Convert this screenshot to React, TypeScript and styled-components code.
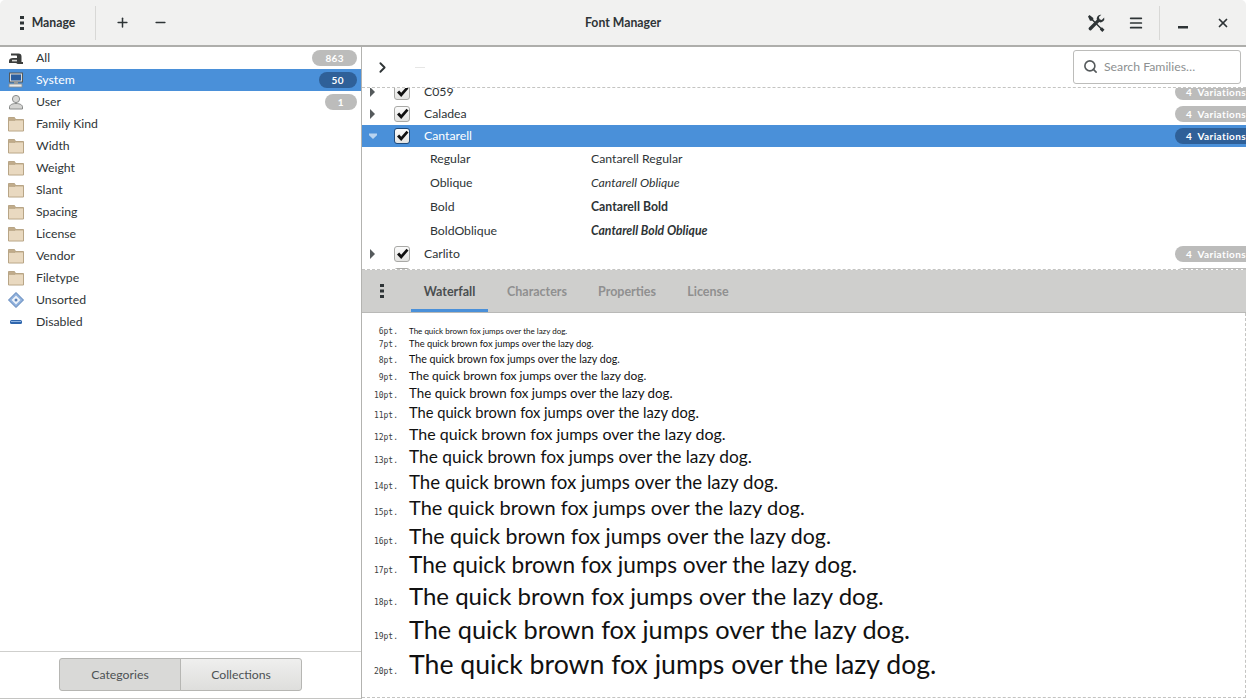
import { useState } from "react";
import styled, { createGlobalStyle } from "styled-components";
import { ChevronRight, Menu, Minus, Plus, Search, X } from "lucide-react";

const GlobalStyle = createGlobalStyle`
  html, body { margin: 0; padding: 0; background: #fff; }
  * { box-sizing: border-box; }
  body { font-family: Lato, "Noto Sans", sans-serif; font-size: 12.25px; color: #2e3436; }
`;

const Window = styled.div`
  width: 1246px;
  height: 699px;
  display: flex;
  flex-direction: column;
  overflow: hidden;
  background: #fff;
`;

const HeaderBar = styled.header`
  height: 47px;
  flex: none;
  display: flex;
  align-items: center;
  justify-content: space-between;
  background: #f1f1f0;
  border-bottom: 2px solid #aeaeab;
  border-radius: 5px 5px 0 0;
  position: relative;
`;

const HeaderGroup = styled.div`
  display: flex;
  align-items: center;
  height: 100%;
`;

const HeaderSeparator = styled.div<{ $gap?: number }>`
  width: 1px;
  height: 34px;
  margin-left: ${(p) => p.$gap ?? 0}px;
  background: #d8d8d6;
`;

const HeaderButton = styled.button<{ $w: number }>`
  width: ${(p) => p.$w}px;
  height: 34px;
  border: 0;
  background: none;
  padding: 0;
  display: flex;
  align-items: center;
  justify-content: center;
  gap: 8px;
  color: #2e3436;
  font: 700 12.25px Lato, sans-serif;
`;

const Title = styled.div`
  position: absolute;
  left: 0;
  right: 0;
  text-align: center;
  font-weight: 700;
  color: #2e3436;
`;

const Body = styled.div`
  flex: 1;
  min-height: 0;
  display: flex;
`;

const Sidebar = styled.aside`
  width: 362px;
  flex: none;
  display: flex;
  flex-direction: column;
  border-right: 1px solid #b3b3b0;
  border-bottom: 1px solid #c4c4c2;
`;

const CategoryList = styled.ul`
  flex: 1;
  margin: 0;
  padding: 0;
  list-style: none;
`;

const CategoryRow = styled.li<{ $selected?: boolean }>`
  height: 22px;
  display: flex;
  align-items: center;
  padding: 0 4px 0 8px;
  background: ${(p) => (p.$selected ? "#4a90d9" : "transparent")};
  color: ${(p) => (p.$selected ? "#fff" : "#2e3436")};
`;

const CategoryIcon = styled.svg`
  width: 16px;
  height: 16px;
  flex: none;
`;

const CategoryName = styled.span`
  margin-left: 12px;
  padding-bottom: 2px;
  flex: 1;
`;

const Badge = styled.span<{ $selected?: boolean }>`
  height: 16px;
  padding: 0 13px;
  border-radius: 8px;
  display: inline-flex;
  align-items: center;
  font-size: 10px;
  font-weight: 700;
  letter-spacing: 0.4px;
  color: #fff;
  background: ${(p) => (p.$selected ? "#2f6098" : "#bcbcbb")};
`;

const SidebarFooter = styled.div`
  height: 47px;
  flex: none;
  border-top: 1px solid #cfcfcd;
  display: flex;
  justify-content: center;
  padding: 6px 0 0 0;
`;

const ModeButton = styled.button<{ $active?: boolean }>`
  width: 122px;
  height: 33px;
  border: 1px solid #b6b6b3;
  margin-left: -1px;
  padding: 0;
  color: #4d5254;
  font: 12.25px Lato, sans-serif;
  background: ${(p) => (p.$active ? "#d9d9d7" : "linear-gradient(#efefee, #dededc)")};
  &:first-child { border-radius: 3px 0 0 3px; margin-left: 0; }
  &:last-child { border-radius: 0 3px 3px 0; }
`;

const Main = styled.main`
  flex: 1;
  min-width: 0;
  display: flex;
  flex-direction: column;
`;

const FamilyToolbar = styled.div`
  height: 41px;
  flex: none;
  display: flex;
  align-items: center;
  padding: 0 5px 0 12px;
  border-bottom: 1px dashed #c4c4c2;
`;

const FaintDash = styled.div`
  width: 10px;
  height: 1px;
  margin-left: 24px;
  background: #e6e6e5;
`;

const SearchBox = styled.div`
  margin-left: auto;
  width: 168px;
  height: 34px;
  border: 1px solid #bcbcba;
  border-radius: 3px;
  display: flex;
  align-items: center;
  gap: 6px;
  padding: 0 8px 1px 9px;
  color: #8d9091;
`;

const FamilyViewport = styled.div`
  height: 182px;
  flex: none;
  overflow: hidden;
  border-bottom: 1px dashed #c4c4c2;
`;

const FamilyScroller = styled.div`
  margin-top: -7px;
`;

const FamilyRow = styled.div<{ $selected?: boolean }>`
  height: 22px;
  display: flex;
  align-items: center;
  overflow: hidden;
  background: ${(p) => (p.$selected ? "#4a90d9" : "transparent")};
  color: ${(p) => (p.$selected ? "#fff" : "#2e3436")};
`;

const Expander = styled.svg`
  width: 8px;
  height: 10px;
  margin-left: 7px;
  flex: none;
`;

const CheckBox = styled.span<{ $selected?: boolean }>`
  width: 16px;
  height: 16px;
  margin-left: 17px;
  flex: none;
  display: flex;
  align-items: center;
  justify-content: center;
  border: 1px solid ${(p) => (p.$selected ? "#1f4a7a" : "#a9a9a6")};
  border-radius: 3px;
  background: linear-gradient(#fbfbfb, #e4e4e2);
`;

const FamilyName = styled.span`
  margin-left: 14px;
  padding-bottom: 1px;
  flex: 1;
`;

const VariationBadge = styled(Badge)`
  width: 71px;
  flex: none;
  white-space: pre;
  padding: 0 0 0 11px;
  border-radius: 8px 0 0 8px;
  overflow: hidden;
`;

const StyleRow = styled.div`
  height: 24px;
  display: flex;
  align-items: center;
  padding: 0 0 1px 68px;
`;

const StyleName = styled.span`
  width: 161px;
  flex: none;
`;

const StyleSample = styled.span<{ $bold?: boolean; $italic?: boolean }>`
  font-weight: ${(p) => (p.$bold ? 700 : 400)};
  font-style: ${(p) => (p.$italic ? "italic" : "normal")};
`;

const PaneHeader = styled.div`
  height: 43px;
  flex: none;
  display: flex;
  background: #cfcfcd;
  border-bottom: 1px solid #b9b9b7;
`;

const PaneMenu = styled.div`
  width: 49px;
  flex: none;
  display: flex;
  align-items: center;
  justify-content: center;
  padding-right: 9px;
`;

const Tabs = styled.div`
  display: flex;
  gap: 5px;
`;

const Tab = styled.div<{ $active?: boolean; $w: number }>`
  width: ${(p) => p.$w}px;
  display: flex;
  align-items: center;
  justify-content: center;
  font-size: 12.5px;
  font-weight: 700;
  color: ${(p) => (p.$active ? "#4a4e50" : "#8f9090")};
  border-bottom: 3px solid ${(p) => (p.$active ? "#4a90d9" : "transparent")};
  padding-top: 3px;
`;

const Waterfall = styled.section`
  flex: 1;
  min-height: 0;
  padding-top: 14px;
  border-right: 1px dashed #c4c4c2;
  border-bottom: 1px dashed #c4c4c2;
  margin-bottom: 1px;
`;

const SampleLine = styled.div<{ $h: number }>`
  height: ${(p) => p.$h}px;
  display: flex;
  align-items: baseline;
  white-space: nowrap;
`;

const PointLabel = styled.span`
  width: 36px;
  margin-right: 11px;
  flex: none;
  text-align: right;
  font: 8px "DejaVu Sans Mono", monospace;
  color: #3a3e40;
`;

const SampleText = styled.span<{ $size: number }>`
  font-size: ${(p) => p.$size}px;
  line-height: 1;
  color: #111;
`;

const Dots = ({ color = "#2e3436" }: { color?: string }) => (
  <svg width="4" height="14" viewBox="0 0 4 14">
    <g fill={color}>
      <rect y="0" width="4" height="3" />
      <rect y="5.5" width="4" height="3" />
      <rect y="11" width="4" height="3" />
    </g>
  </svg>
);

const CheckMark = () => (
  <svg width="13" height="12" viewBox="0 0 13 12">
    <path d="M1 6.500 3.200 4.500 5.200 6.800 10.500.8 12.500 2.500 5.200 11z" fill="#111" />
  </svg>
);

const FontIcon = () => (
  <CategoryIcon viewBox="0 0 16 16">
    <path d="M3 3.500h7.500c2 0 3 1 3 3V12H15v2H9.500c-.5-1-1.500-1-3-1H1v-2c0-2 1.500-3 4-3h4V6.500c0-.8-.4-1-1-1H3z" fill="#3b3d3c" />
    <rect x="4" y="9.800" width="5" height="1.600" fill="#d6d6d4" />
  </CategoryIcon>
);

const ComputerIcon = () => (
  <CategoryIcon viewBox="0 0 16 16">
    <rect x="1.500" y="1" width="13" height="9" fill="#d8dadb" stroke="#55595b" />
    <rect x="3" y="2.500" width="10" height="6" fill="#2b5e9e" />
    <rect x="6" y="10" width="4" height="2" fill="#9a9d9d" />
    <rect x="1" y="12" width="13" height="3" fill="#e8e8e6" stroke="#8b8d8d" strokeWidth="0.8" />
  </CategoryIcon>
);

const UserIcon = () => (
  <CategoryIcon viewBox="0 0 16 16">
    <circle cx="8" cy="5" r="3.600" fill="#d9d9d7" stroke="#8a8c8b" />
    <path d="M1.500 15v-2c0-2 2.500-3.500 6.500-3.500s6.500 1.500 6.500 3.500v2z" fill="#d4d4d2" stroke="#8a8c8b" />
  </CategoryIcon>
);

const FolderIcon = () => (
  <CategoryIcon viewBox="0 0 16 16">
    <path d="M.5 1.500h6l1 2h8v11.500H.5z" fill="#c2ad8c" stroke="#b8a586" />
    <path d="M1 4.500h14V14.500H1z" fill="#e9d9c0" />
    <path d="M.5 4.200h6.500l1-1" fill="none" stroke="#b8a586" />
  </CategoryIcon>
);

const UnsortedIcon = () => (
  <CategoryIcon viewBox="0 0 16 16">
    <path d="M8 .5 15.500 8 8 15.500.5 8z" fill="#8fb0dc" stroke="#5c83b8" />
    <path d="M8 3.500 12.500 8 8 12.500 3.500 8z" fill="#eef3fa" />
    <circle cx="8" cy="8" r="1.500" fill="#5c83b8" />
  </CategoryIcon>
);

const DisabledIcon = () => (
  <CategoryIcon viewBox="0 0 16 16">
    <rect x="2" y="6" width="12" height="4" rx="1.500" fill="#2f66ad" />
    <rect x="3" y="7" width="10" height="1" fill="#8fb4e2" />
  </CategoryIcon>
);

const ToolsIcon = () => (
  <svg width="18" height="18" viewBox="0 0 18 18" fill="#2e3436">
    <path d="M1 2.500 2.500 1l3.800 3v1.800l8 8 .7-.5 2.500 2.500-2.200 2.200-2.500-2.500.5-.7-8-8H3z" />
    <path d="M13.500.8a3.800 3.800 0 0 0-3.600 5L2 13.500a1.700 1.700 0 0 0 2.400 2.400l7.800-7.800a3.800 3.800 0 0 0 5-4.600l-2.500 2.400-2.200-.6-.6-2.200 2.400-2.300z" />
  </svg>
);

const MinimizeIcon = () => (
  <svg width="10" height="12" viewBox="0 0 10 12">
    <rect y="9" width="10" height="2.500" fill="#2e3436" />
  </svg>
);

const categories = [
  { name: "All", icon: <FontIcon />, count: "863" },
  { name: "System", icon: <ComputerIcon />, count: "50", selected: true },
  { name: "User", icon: <UserIcon />, count: "1" },
  { name: "Family Kind", icon: <FolderIcon /> },
  { name: "Width", icon: <FolderIcon /> },
  { name: "Weight", icon: <FolderIcon /> },
  { name: "Slant", icon: <FolderIcon /> },
  { name: "Spacing", icon: <FolderIcon /> },
  { name: "License", icon: <FolderIcon /> },
  { name: "Vendor", icon: <FolderIcon /> },
  { name: "Filetype", icon: <FolderIcon /> },
  { name: "Unsorted", icon: <UnsortedIcon /> },
  { name: "Disabled", icon: <DisabledIcon /> },
];

const styles = [
  { name: "Regular", sample: "Cantarell Regular" },
  { name: "Oblique", sample: "Cantarell Oblique", italic: true },
  { name: "Bold", sample: "Cantarell Bold", bold: true },
  { name: "BoldOblique", sample: "Cantarell Bold Oblique", bold: true, italic: true },
];

const tabs = [
  { name: "Waterfall", w: 77 },
  { name: "Characters", w: 88 },
  { name: "Properties", w: 82 },
  { name: "License", w: 70 },
];

const sizes = [
  { pt: 6, h: 12 }, { pt: 7, h: 15 }, { pt: 8, h: 16 }, { pt: 9, h: 17 }, { pt: 10, h: 19 },
  { pt: 11, h: 20 }, { pt: 12, h: 22 }, { pt: 13, h: 25 }, { pt: 14, h: 24 }, { pt: 15, h: 29 },
  { pt: 16, h: 28 }, { pt: 17, h: 30 }, { pt: 18, h: 33 }, { pt: 19, h: 34 }, { pt: 20, h: 35 },
];

const Family = ({ name, selected, open }: { name?: string; selected?: boolean; open?: boolean }) => (
  <FamilyRow $selected={selected}>
    <Expander viewBox="0 0 8 10">
      {open ? (
        <path d="M-2 2.500h12L4 8z" fill="#b9d4f0" />
      ) : (
        <path d="M1 0v10l5-5z" fill="#555a5c" />
      )}
    </Expander>
    <CheckBox $selected={selected}>
      <CheckMark />
    </CheckBox>
    <FamilyName>{name}</FamilyName>
    <VariationBadge $selected={selected}>{name && "4  Variations"}</VariationBadge>
  </FamilyRow>
);

export default function App() {
  const [tab] = useState("Waterfall");
  return (
    <Window>
      <GlobalStyle />
      <HeaderBar>
        <Title>Font Manager</Title>
        <HeaderGroup>
          <HeaderButton $w={95}><Dots />Manage</HeaderButton>
          <HeaderSeparator />
          <HeaderButton $w={53}><Plus size={15} strokeWidth={2.4} /></HeaderButton>
          <HeaderButton $w={23}><Minus size={15} strokeWidth={2.4} /></HeaderButton>
        </HeaderGroup>
        <HeaderGroup>
          <HeaderButton $w={40}><ToolsIcon /></HeaderButton>
          <HeaderButton $w={40}><Menu size={16} strokeWidth={2.6} /></HeaderButton>
          <HeaderSeparator $gap={3} />
          <HeaderButton $w={46}><MinimizeIcon /></HeaderButton>
          <HeaderButton $w={34}><X size={14} strokeWidth={3} /></HeaderButton>
          <HeaderButton $w={6} />
        </HeaderGroup>
      </HeaderBar>
      <Body>
        <Sidebar>
          <CategoryList>
            {categories.map((c) => (
              <CategoryRow key={c.name} $selected={c.selected}>
                {c.icon}
                <CategoryName>{c.name}</CategoryName>
                {c.count && <Badge $selected={c.selected}>{c.count}</Badge>}
              </CategoryRow>
            ))}
          </CategoryList>
          <SidebarFooter>
            <ModeButton $active>Categories</ModeButton>
            <ModeButton>Collections</ModeButton>
          </SidebarFooter>
        </Sidebar>
        <Main>
          <FamilyToolbar>
            <ChevronRight size={17} strokeWidth={2.6} color="#2e3436" />
            <FaintDash />
            <SearchBox>
              <Search size={15} strokeWidth={2.6} color="#555a5c" />
              Search Families…
            </SearchBox>
          </FamilyToolbar>
          <FamilyViewport>
            <FamilyScroller>
              <Family name="C059" />
              <Family name="Caladea" />
              <Family name="Cantarell" selected open />
              {styles.map((s) => (
                <StyleRow key={s.name}>
                  <StyleName>{s.name}</StyleName>
                  <StyleSample $bold={s.bold} $italic={s.italic}>{s.sample}</StyleSample>
                </StyleRow>
              ))}
              <Family name="Carlito" />
              <Family />
            </FamilyScroller>
          </FamilyViewport>
          <PaneHeader>
            <PaneMenu><Dots /></PaneMenu>
            <Tabs>
              {tabs.map((t) => (
                <Tab key={t.name} $w={t.w} $active={t.name === tab}>{t.name}</Tab>
              ))}
            </Tabs>
          </PaneHeader>
          <Waterfall>
            {sizes.map((s) => (
              <SampleLine key={s.pt} $h={s.h}>
                <PointLabel>{s.pt}pt.</PointLabel>
                <SampleText $size={(s.pt * 4) / 3}>The quick brown fox jumps over the lazy dog.</SampleText>
              </SampleLine>
            ))}
          </Waterfall>
        </Main>
      </Body>
    </Window>
  );
}
